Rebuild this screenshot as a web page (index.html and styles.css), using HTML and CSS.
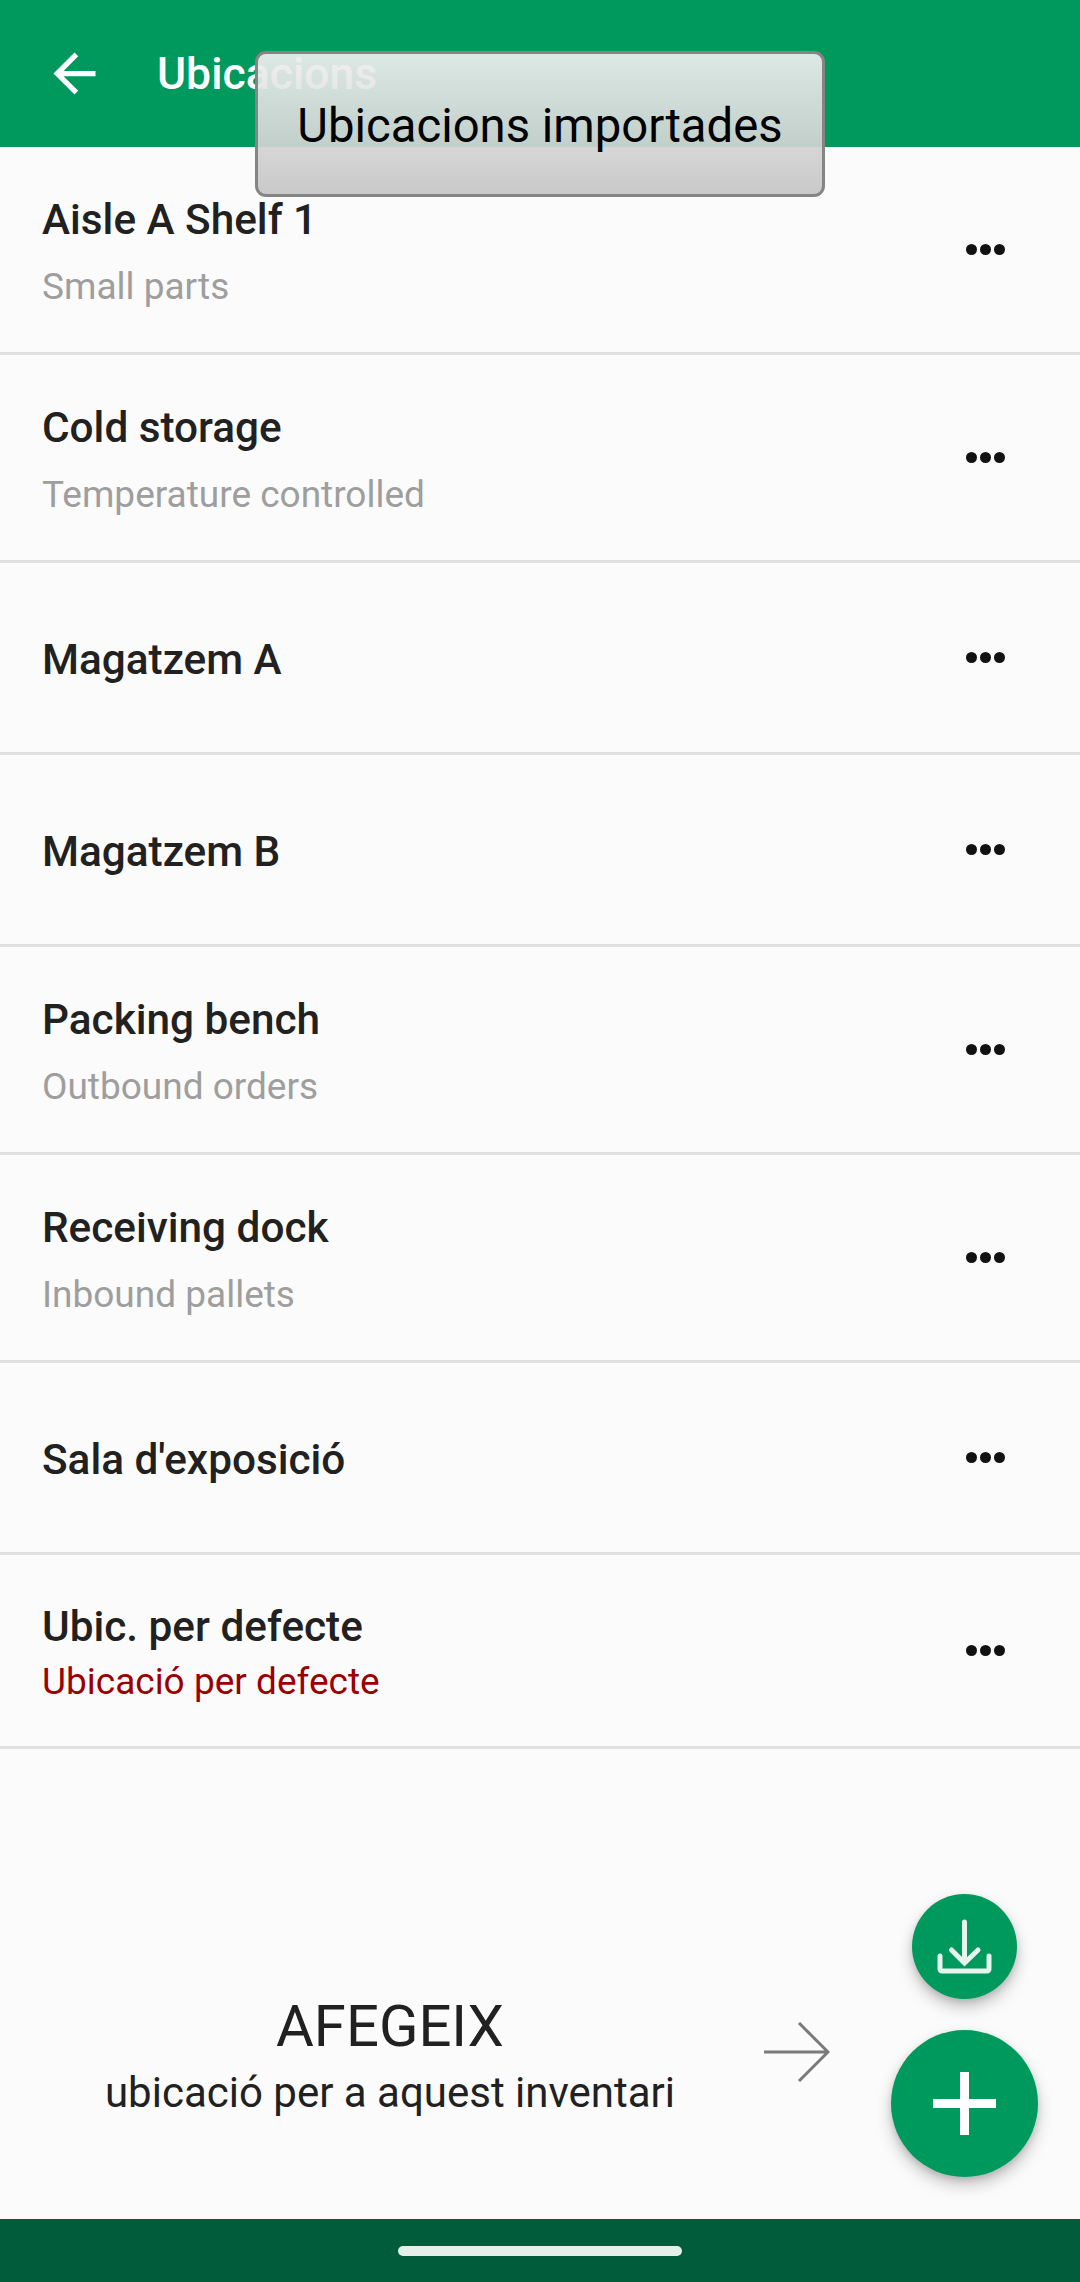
FILE: index.html
```html
<!DOCTYPE html>
<html lang="ca">
<head>
<meta charset="utf-8">
<title>Ubicacions</title>
<link rel="stylesheet" href="styles.css">
</head>
<body>
<div class="screen">
  <header class="appbar">
    <svg class="back" viewBox="0 0 24 24"><path d="M20 11H7.830l5.590-5.590L12 4l-8 8 8 8 1.410-1.410L7.830 13H20v-2z"/></svg>
    <h1 class="appbar-title">Ubicacions</h1>
  </header>
  <main class="content">
    <ul class="list">
      <li class="row row-sub"><div class="row-text"><span class="name">Aisle A Shelf 1</span><span class="sub">Small parts</span></div><div class="dots"><i></i><i></i><i></i></div></li>
      <li class="row row-sub"><div class="row-text"><span class="name">Cold storage</span><span class="sub">Temperature controlled</span></div><div class="dots"><i></i><i></i><i></i></div></li>
      <li class="row"><div class="row-text"><span class="name">Magatzem A</span></div><div class="dots"><i></i><i></i><i></i></div></li>
      <li class="row"><div class="row-text"><span class="name">Magatzem B</span></div><div class="dots"><i></i><i></i><i></i></div></li>
      <li class="row row-sub"><div class="row-text"><span class="name">Packing bench</span><span class="sub">Outbound orders</span></div><div class="dots"><i></i><i></i><i></i></div></li>
      <li class="row row-sub"><div class="row-text"><span class="name">Receiving dock</span><span class="sub">Inbound pallets</span></div><div class="dots"><i></i><i></i><i></i></div></li>
      <li class="row"><div class="row-text"><span class="name">Sala d'exposició</span></div><div class="dots"><i></i><i></i><i></i></div></li>
      <li class="row row-default"><div class="row-text"><span class="name">Ubic. per defecte</span><span class="sub-default">Ubicació per defecte</span></div><div class="dots"><i></i><i></i><i></i></div></li>
    </ul>
    <div class="hint">
      <p class="hint-title">AFEGEIX</p>
      <p class="hint-sub">ubicació per a aquest inventari</p>
    </div>
    <svg class="hint-arrow" viewBox="0 0 66 60"><path d="M0 30H64M35 1L64 30L35 59"/></svg>
    <button class="fab fab-small" type="button" aria-label="Importa">
      <svg viewBox="0 0 105 105"><path d="M52.500 28V68M39.500 56L52.500 69L66 56M28 62V75a2 2 0 0 0 2 2H75a2 2 0 0 0 2-2V62"/></svg>
    </button>
    <button class="fab fab-large" type="button" aria-label="Afegeix">
      <svg viewBox="0 0 147 147"><path d="M42 73.500H105M73.500 42V105"/></svg>
    </button>
  </main>
  <footer class="navbar"><span class="home-pill"></span></footer>
  <div class="toast">Ubicacions importades</div>
</div>
</body>
</html>
```

FILE: styles.css
```css
* { box-sizing: border-box; }
html, body { margin: 0; padding: 0; }
body { font-family: Roboto, "Liberation Sans", sans-serif; background: #fbfbfb; }
.screen { position: relative; width: 1080px; height: 2282px; display: flex; flex-direction: column; overflow: hidden; background: #fbfbfb; }

.appbar { height: 147px; flex: none; background: #00995d; display: flex; align-items: center; padding-left: 43px; }
.back { width: 63px; height: 63px; fill: #fff; flex: none; }
.appbar-title { margin: 0 0 0 51px; color: #fff; font-size: 44.5px; font-weight: 460; }

.content { position: relative; flex: 1; display: flex; flex-direction: column; }
.list { list-style: none; margin: 0; padding: 0; }
.row { height: 192px; border-bottom: 3px solid #e0e0e0; display: flex; align-items: center; padding: 0 75px 0 42px; }
.row-sub { height: 208px; }
.row-default { height: 194px; }
.row-text { flex: 1; display: flex; flex-direction: column; position: relative; top: 2px; }
.name { font-size: 42.3px; font-weight: 460; color: #212121; line-height: 50px; }
.sub { font-size: 37px; color: #9e9e9e; line-height: 44px; margin-top: 20px; }
.sub-default { font-size: 37px; color: #9b0000; line-height: 44px; margin-top: 8px; }
.dots { display: flex; gap: 3px; }
.dots i { width: 11px; height: 11px; border-radius: 50%; background: #111; }

.hint { margin: 0; position: absolute; left: 0; width: 780px; top: 1846px; text-align: center; color: #212121; }
.hint-title { margin: 0; font-size: 58px; line-height: 66px; }
.hint-sub { margin: 0; font-size: 42px; line-height: 62px; padding-top: 3px; }
.hint-arrow { position: absolute; left: 764px; top: 1875px; width: 66px; height: 60px; fill: none; stroke: #7a7a7a; stroke-width: 3; }

.fab { position: absolute; border: 0; padding: 0; border-radius: 50%; background: #00995d; box-shadow: 0 8px 16px rgba(0,0,0,.22), 0 3px 6px rgba(0,0,0,.12); }
.fab svg { display: block; width: 100%; height: 100%; fill: none; }
.fab-small { left: 912px; top: 1747px; width: 105px; height: 105px; }
.fab-small path { stroke: #e8f5ef; stroke-width: 5; stroke-linecap: round; }
.fab-large { left: 891px; top: 1883px; width: 147px; height: 147px; }
.fab-large path { stroke: #fff; stroke-width: 9; }

.navbar { height: 63px; flex: none; background: #005c3a; display: flex; justify-content: center; padding-top: 27px; }
.home-pill { width: 284px; height: 10px; border-radius: 5px; background: #e6f0eb; }

.toast { position: absolute; left: 255px; top: 51px; width: 570px; height: 146px; display: flex; align-items: center; justify-content: center; padding-top: 4px; border: 3px solid #858585; border-radius: 11px; background: linear-gradient(rgba(239,239,239,.92), rgba(197,197,197,.92)); color: #000; font-size: 47.25px; }
```
